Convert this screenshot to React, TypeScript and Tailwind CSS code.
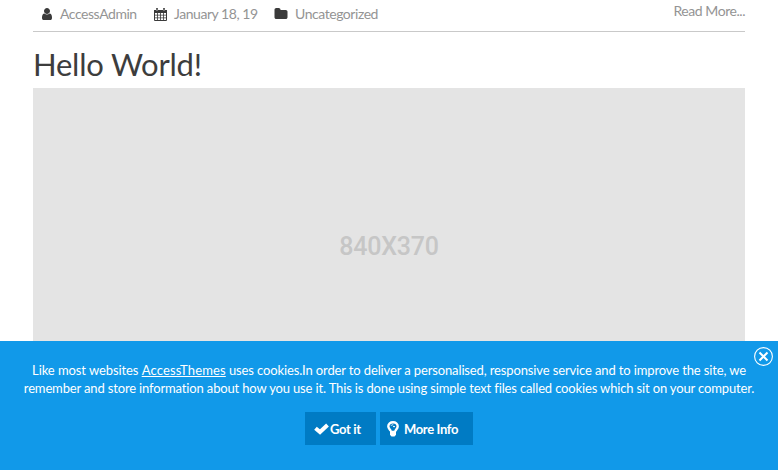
import type { ReactNode } from "react";

function Glyph({ d, className }: { d: string; className: string }) {
  return (
    <svg viewBox="0 0 1792 1792" fill="currentColor" className={className} aria-hidden="true">
      <path d={d} />
    </svg>
  );
}

const USER =
  "M1536 1399q0 109-62.5 187t-150.5 78h-854q-88 0-150.5-78t-62.5-187q0-85 8.5-160.5t31.5-152 58.5-131 94-89 134.5-34.5q131 128 313 128t313-128q76 0 134.5 34.5t94 89 58.5 131 31.5 152 8.5 160.5zm-256-887q0 159-112.5 271.5t-271.5 112.5-271.5-112.5-112.5-271.5 112.5-271.5 271.5-112.5 271.5 112.5 112.5 271.5z";
const FOLDER =
  "M1728 608v704q0 92-66 158t-158 66h-1216q-92 0-158-66t-66-158v-960q0-92 66-158t158-66h320q92 0 158 66t66 158v32h672q92 0 158 66t66 158z";

function Calendar() {
  return (
    <svg viewBox="0 0 13 13" className="mr-[7px] h-[13px] w-[13px] text-[#3a3a3a]" fill="currentColor" aria-hidden="true">
      <path
        fillRule="evenodd"
        d="M0 2h2V.6Q2 0 3 0t1 .6V2h5V.6Q9 0 10 0t1 .6V2h2v10q0 1-1 1H1q-1 0-1-1ZM1 5v1.8h2.2V5Zm3 0v1.8h2.1V5Zm2.9 0v1.8H9V5Zm2.9 0v1.8H12V5ZM1 7.6v1.8h2.2V7.6Zm3 0v1.8h2.1V7.6Zm2.9 0v1.8H9V7.6Zm2.9 0v1.8H12V7.6ZM1 10.2V12h2.2v-1.8Zm3 0V12h2.1v-1.8Zm2.9 0V12H9v-1.8Zm2.9 0V12H12v-1.8ZM2.7 1v2h.6V1Zm7 0v2h.6V1Z"
      />
    </svg>
  );
}

function Meta({ icon, width, children }: { icon: ReactNode; width: string; children: ReactNode }) {
  return (
    <span className={"flex items-center whitespace-nowrap " + width}>
      {icon}
      <span>{children}</span>
    </span>
  );
}

export default function App() {
  return (
    <div className="flex h-[470px] w-[778px] flex-col overflow-hidden bg-white font-['Lato',sans-serif]">
      <main className="flex h-[341px] shrink-0 flex-col px-[33px]">
        <div className="flex h-8 shrink-0 items-start justify-between border-b border-[#c9c9c9] text-[14px] leading-[20px] tracking-[-0.45px] text-[#949494]">
          <div className="flex pt-1 pl-[7px]">
            <Meta width="w-[114px]" icon={<Glyph d={USER} className="mr-[6px] h-[14px] w-[14px] text-[#3a3a3a]" />}>AccessAdmin</Meta>
            <Meta width="w-[120px]" icon={<Calendar />}>January 18, 19</Meta>
            <Meta width="w-[110px]" icon={<Glyph d={FOLDER} className="mr-[7px] h-[14px] w-[14px] text-[#3a3a3a]" />}>Uncategorized</Meta>
          </div>
          <a className="pt-px">Read More...</a>
        </div>
        <h2 className="h-14 shrink-0 pt-[12px] text-[31px] leading-[40px] tracking-[-0.22px] text-[#3d3d3d]">Hello World!</h2>
        <div className="flex flex-1 justify-center bg-[#e4e4e4] pt-[144px] font-['Roboto',sans-serif] text-[25px] leading-[30px] font-medium tracking-[-0.2px] text-[#c6c6c6]">
          840X370
        </div>
      </main>
      <section className="relative flex h-[129px] shrink-0 flex-col items-center bg-[#1199e9] pt-5 text-white">
        <p className="text-center text-[13px] leading-[18px] whitespace-nowrap">
          <span className="block tracking-[-0.13px]">
            <span className="tracking-[-0.08px]">Like most websites </span>
            <a className="tracking-[0.15px] underline">AccessThemes</a> uses cookies.In order to deliver a personalised, responsive service and to improve the site, we
          </span>
          <span className="block tracking-[-0.15px]">
            remember and store information about how you use it. This is done using simple text files called cookies which sit on your computer.
          </span>
        </p>
        <div className="mt-[15px] flex gap-1 text-[13px] font-bold tracking-[-0.35px]">
          <button className="flex h-[33px] w-[71px] items-center bg-[#007bc4] pl-[9px]">
            <svg viewBox="0 0 15 12" className="mr-px h-3 w-[15px] shrink-0" fill="none" stroke="currentColor" strokeWidth="4">
              <path d="M1.5 5.2 6 9 13.5 2" />
            </svg>
            <span className="pt-[2px] whitespace-nowrap">Got it</span>
          </button>
          <button className="flex h-[33px] w-[93px] items-center bg-[#007bc4] pl-[7px]">
            <svg viewBox="0 0 12 16" className="mr-[5px] h-4 w-3 shrink-0" fill="none" stroke="currentColor">
              <path d="M3.6 10.2C3.4 8.4 1.3 7.8 1.3 5.3 1.3 2.8 3.4 1.2 6 1.2s4.7 1.6 4.7 4.1c0 2.5-1.9 3.1-2.3 4.9" strokeWidth="2.4" />
              <path d="M4.1 4.7C4.6 3.9 5.2 3.7 6.3 3.9M6 5.6h2" strokeWidth="1" />
              <path d="M3 9.8h6v4L7.5 15.5h-3L3 13.8Z" fill="currentColor" stroke="none" />
            </svg>
            <span className="pt-[2px] whitespace-nowrap">More Info</span>
          </button>
        </div>
        <button aria-label="Close" className="absolute top-[6px] right-[5px] h-[19px] w-[19px]">
          <svg viewBox="0 0 19 19" className="h-[19px] w-[19px]" fill="none" stroke="currentColor">
            <circle cx="9.5" cy="9.5" r="8.9" strokeWidth="1.1" />
            <path d="m5.5 5.5 8 8m0-8-8 8" strokeWidth="2" />
          </svg>
        </button>
      </section>
    </div>
  );
}
